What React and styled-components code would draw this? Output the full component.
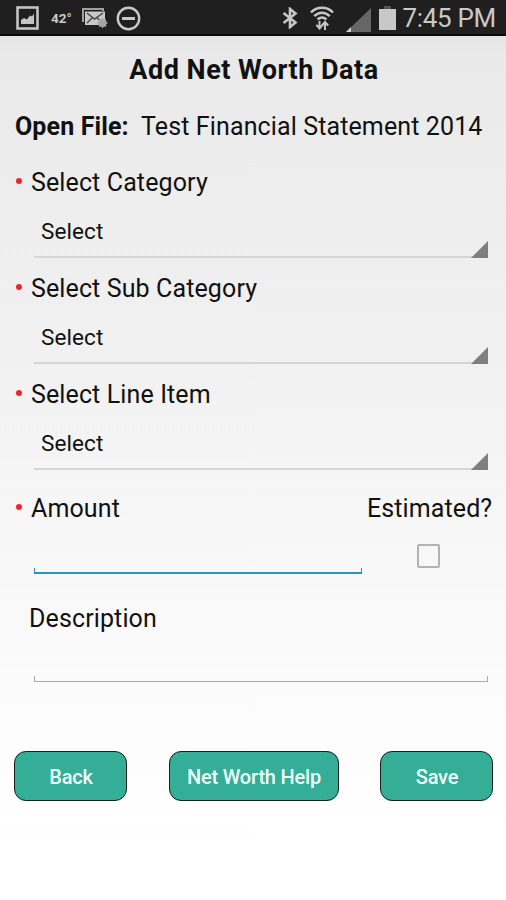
import React from 'react';
import styled, { createGlobalStyle } from 'styled-components';

const GlobalStyle = createGlobalStyle`
    * {
        box-sizing: border-box;
    }

    body {
        margin: 0;
        font-family: Roboto, sans-serif;
        color: #111;
    }
`;

const Screen = styled.div`
    display: flex;
    flex-direction: column;
    width: 506px;
    height: 900px;
    overflow: hidden;
    background: linear-gradient(#e5e5e5 36px, #e9e9e9 52px, #ededed 20%, #f1f1f1 40%, #f6f6f6 56%, #fafafa 72%, #fdfdfd 84%, #fff 94%);
`;

const StatusBar = styled.header`
    display: flex;
    justify-content: space-between;
    align-items: center;
    height: 36px;
    padding: 2px 10px 0 16px;
    background: #1f1f1f;
    border-bottom: 2px solid #0a0a0a;
    color: #c9c9c9;
`;

const StatusIcons = styled.div`
    display: flex;
    align-items: center;
    height: 32px;

    svg {
        display: block;
        flex: none;
    }
`;

const Temperature = styled.span`
    width: 21px;
    margin: 0 11px 0 12px;
    font-size: 13.5px;
    font-weight: 700;
    line-height: 32px;
    white-space: nowrap;
`;

const Clock = styled.span`
    margin-left: 6px;
    font-size: 26px;
    line-height: 34px;
    letter-spacing: -0.3px;
    white-space: nowrap;
`;

const Title = styled.h1`
    margin: 19px 0 0;
    padding-left: 2px;
    font-size: 27px;
    font-weight: 700;
    line-height: 30px;
    text-align: center;
    letter-spacing: 0.5px;
`;

const OpenFile = styled.p`
    display: flex;
    margin: 27px 0 25px;
    padding-left: 15px;
    font-size: 25px;
    line-height: 30px;
    white-space: nowrap;
    letter-spacing: 0.12px;

    strong {
        width: 126px;
    }
`;

const FieldGroup = styled.div`
    height: 106px;
`;

const Label = styled.label`
    display: flex;
    align-items: center;
    height: 32px;
    padding-left: ${props => (props.$required ? '16px' : '29px')};
    font-size: 25px;
    line-height: 32px;
    letter-spacing: 0.12px;
    white-space: nowrap;

    &::before {
        content: '';
        display: ${props => (props.$required ? 'block' : 'none')};
        width: 6px;
        height: 6px;
        margin: 0 9px 4px 0;
        border-radius: 50%;
        background: #f4222c;
    }
`;

const Spinner = styled.div`
    display: flex;
    justify-content: space-between;
    align-items: flex-end;
    height: 59px;
    margin: 0 18px 0 34px;
    border-bottom: 2px solid #d5d5d5;
`;

const SpinnerValue = styled.span`
    padding: 0 0 10px 7px;
    font-size: 22.5px;
    line-height: 30px;
    letter-spacing: 0.1px;
`;

const SpinnerCorner = styled.svg`
    display: block;
    width: 17px;
    height: 17px;
    margin-bottom: -2px;
    fill: #7f7f7f;
`;

const AmountRow = styled.div`
    display: flex;
    justify-content: space-between;
    height: 110px;
    margin-top: 8px;
`;

const EstimatedColumn = styled.div`
    width: 139px;
`;

const EstimatedLabel = styled.label`
    display: block;
    font-size: 25px;
    line-height: 32px;
    letter-spacing: 0.1px;
    white-space: nowrap;
`;

const Checkbox = styled.div`
    width: 23px;
    height: 24px;
    margin: 19px 0 0 50px;
    border: 2px solid #b2b2b2;
    border-radius: 2px;
`;

const TextLine = styled.div`
    width: ${props => props.$width};
    height: 6px;
    margin: ${props => props.$top} 0 0 34px;
    border: solid ${props => (props.$focused ? '#2d92c5' : '#aaa')};
    border-width: 0 1px ${props => (props.$focused ? '2px' : '1px')};
`;

const DescriptionField = styled.div`
    height: 148px;
`;

const Actions = styled.div`
    display: flex;
    justify-content: space-between;
    padding: 0 13px 0 14px;
`;

const ActionButton = styled.button`
    width: ${props => (props.$wide ? '170px' : '113px')};
    height: 50px;
    padding: 1px 0 0 1px;
    border: 1.5px solid #14211e;
    border-radius: 12px;
    background: #34ae97;
    color: #f0fffb;
    font-family: inherit;
    font-size: 20px;
    font-weight: 500;
    line-height: 30px;
    letter-spacing: -0.2px;
    white-space: nowrap;
`;

const GalleryIcon = () => (
    <svg width="23" height="24" viewBox="0 0 23 24" fill="none">
        <rect x="1.5" y="1.5" width="20" height="21" stroke="#c4c4c4" strokeWidth="2.6" />
        <path d="M5 18V14l3-2 3 1.5 3-4 2 1 2-3V18z" fill="#c4c4c4" />
    </svg>
);

const MailIcon = () => (
    <svg width="26" height="21" viewBox="0 0 26 21" fill="none">
        <path d="M1 14V1h20v2" stroke="#a0a0a0" strokeWidth="2" />
        <rect x="3" y="3.5" width="20" height="13.500" fill="#c8c8c8" />
        <path d="M5 5l7.500 6L21 5M5 15l5-5M20 14l-5-4" stroke="#444" strokeWidth="1.4" />
        <circle cx="20.5" cy="15" r="4" fill="#a5a5a5" />
        <path d="M20.5 10v10M15.5 15h10M17 11.500l7 7M24 11.500l-7 7" stroke="#a5a5a5" strokeWidth="1.3" />
    </svg>
);

const BlockingIcon = () => (
    <svg width="25" height="25" viewBox="0 0 25 25" fill="none" stroke="#c8c8c8">
        <circle cx="12.500" cy="12.500" r="10.700" strokeWidth="2.400" />
        <path d="M6 12.500h13" strokeWidth="3" />
    </svg>
);

const BluetoothIcon = () => (
    <svg width="16" height="22" viewBox="0 0 16 22" fill="none" stroke="#c6c6c6" strokeWidth="2.600">
        <path d="M1.500 6l12 9.500L8 20V2l5.500 4.500L1.500 16" />
    </svg>
);

const WifiIcon = () => (
    <svg width="24" height="25" viewBox="0 0 24 25" fill="none" stroke="#c6c6c6" strokeWidth="2.500">
        <path d="M1 6.500c6-6.200 16-6.200 22 0M4.300 10.200c4.500-4.600 10.900-4.600 15.400 0M7.600 13.500c2.800-2.600 6-2.600 8.800 0" />
        <path d="M9.500 15v8M6.300 18.800l3.200 3.700 3.200-3.700M15 24v-7.500M11.900 19.500l3.100-3.500 3.200 3.500" strokeWidth="2" />
    </svg>
);

const SignalIcon = () => (
    <svg width="25" height="25" viewBox="0 0 25 25">
        <path d="M0 25L25 1v24z" fill="#666" />
        <path d="M0 25l5-5v5z" fill="#d0d0d0" />
    </svg>
);

const BatteryIcon = () => (
    <svg width="17" height="24" viewBox="0 0 17 24">
        <path d="M5 0h7v3H5z" fill="#555" />
        <path d="M0 3h17v21H0z" fill="#c8c8c8" />
    </svg>
);

const IconSlot = styled.span`
    margin: ${props => props.$margin};
`;

const selects = ['Select Category', 'Select Sub Category', 'Select Line Item'];

function SelectField({ label }) {
    return (
        <FieldGroup>
            <Label $required>{label}</Label>
            <Spinner>
                <SpinnerValue>Select</SpinnerValue>
                <SpinnerCorner viewBox="0 0 17 17">
                    <path d="M0 17L17 0v17z" />
                </SpinnerCorner>
            </Spinner>
        </FieldGroup>
    );
}

function App() {
    return (
        <React.Fragment>
            <GlobalStyle />
            <Screen>
                <StatusBar>
                    <StatusIcons>
                        <IconSlot $margin="0"><GalleryIcon /></IconSlot>
                        <Temperature>42°</Temperature>
                        <IconSlot $margin="0 8px 0 -1px"><MailIcon /></IconSlot>
                        <IconSlot $margin="0"><BlockingIcon /></IconSlot>
                    </StatusIcons>
                    <StatusIcons>
                        <IconSlot $margin="0 12px 0 0"><BluetoothIcon /></IconSlot>
                        <IconSlot $margin="0 12px 0 0"><WifiIcon /></IconSlot>
                        <IconSlot $margin="2px 8px 0 0"><SignalIcon /></IconSlot>
                        <IconSlot $margin="0"><BatteryIcon /></IconSlot>
                        <Clock>7:45 PM</Clock>
                    </StatusIcons>
                </StatusBar>
                <Title>Add Net Worth Data</Title>
                <OpenFile>
                    <strong>Open File:</strong>
                    <span>Test Financial Statement 2014</span>
                </OpenFile>
                {selects.map(label => <SelectField key={label} label={label} />)}
                <AmountRow>
                    <div>
                        <Label $required>Amount</Label>
                        <TextLine $width="328px" $top="43px" $focused />
                    </div>
                    <EstimatedColumn>
                        <EstimatedLabel>Estimated?</EstimatedLabel>
                        <Checkbox />
                    </EstimatedColumn>
                </AmountRow>
                <DescriptionField>
                    <Label>Description</Label>
                    <TextLine $width="454px" $top="41px" />
                </DescriptionField>
                <Actions>
                    <ActionButton>Back</ActionButton>
                    <ActionButton $wide>Net Worth Help</ActionButton>
                    <ActionButton>Save</ActionButton>
                </Actions>
            </Screen>
        </React.Fragment>
    );
}

export default App;
